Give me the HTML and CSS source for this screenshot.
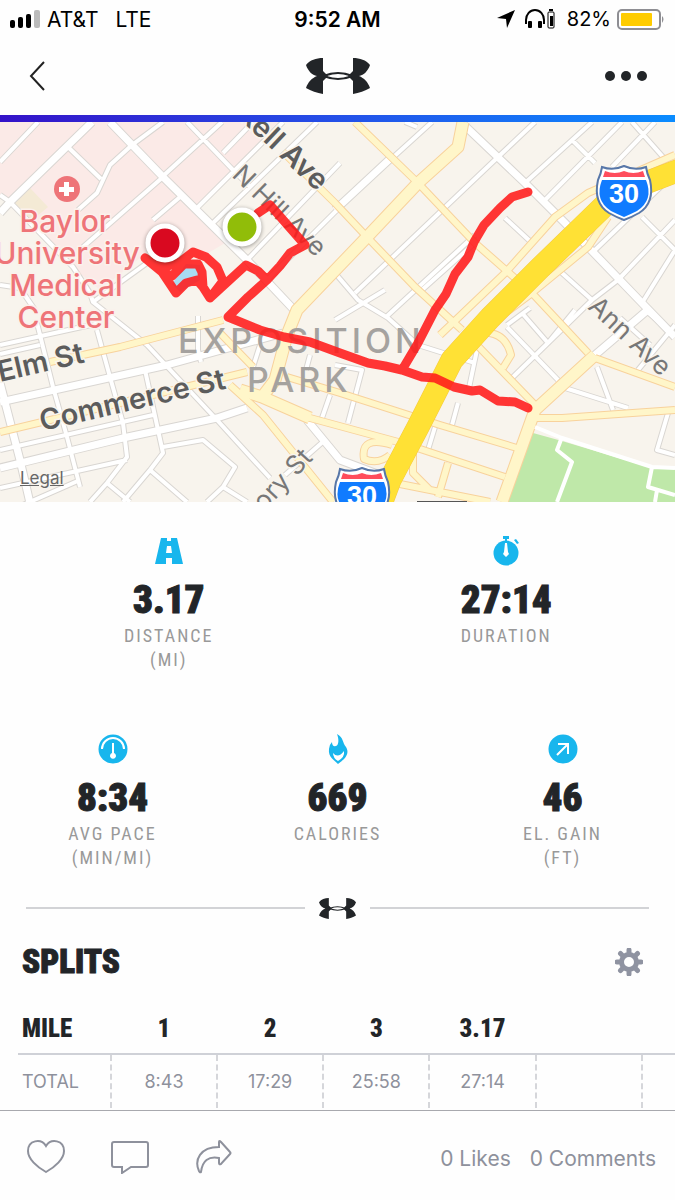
FILE: index.html
```
<!DOCTYPE html>
<html lang="en">
<head>
  <meta charset="UTF-8">
  <meta name="viewport" content="width=device-width, initial-scale=1">
  <title>Workout</title>
  <link rel="stylesheet" href="styles.css">
</head>
<body>
<svg class="defs" width="0" height="0" aria-hidden="true">
  <symbol id="ua" viewBox="0 0 64 36">
    <path id="wing" d="M17 0C10 0 4 2 0 7C2 13 6 17 11 18C6 20 2 24 0 30C5 33 11 35 17 36L17 23L22 18L17 13Z"/>
    <use href="#wing" transform="translate(64 0) scale(-1 1)"/>
    <path d="M17 17Q32 11 47 17V19Q32 25 17 19ZM21 18Q32 22 43 18Q32 14 21 18Z" fill-rule="evenodd"/>
  </symbol>
</svg>

<div class="status">
  <div class="status-left">
    <svg width="30" height="18" viewBox="0 0 30 18"><rect y="10" width="5" height="8" rx="2"/><rect x="8" y="7" width="5" height="11" rx="2"/><rect x="16" y="4" width="5" height="14" rx="2"/><rect x="24" width="6" height="18" rx="2" fill="#bbb"/></svg>
    <span class="carrier">AT&amp;T</span>
    <span>LTE</span>
  </div>
  <div class="time">9:52 AM</div>
  <div class="status-right">
    <svg width="18" height="18" viewBox="0 0 18 18"><path d="M18 0L10 18L9 9L0 8Z"/></svg>
    <svg class="phones" width="30" height="20" viewBox="0 0 30 20"><path d="M1 15V11A9 10 0 0 1 19 11V15" fill="none" stroke="#000" stroke-width="2"/><rect x="3" y="12" width="4" height="7" rx="1"/><rect x="13" y="12" width="4" height="7" rx="1"/><rect x="23" y="3" width="6" height="16" rx="1" fill="none" stroke="#000"/><rect x="24" y="0" width="4" height="2"/><rect x="25" y="7" width="3" height="10"/></svg>
    <span>82%</span>
    <svg width="48" height="21" viewBox="0 0 48 21"><rect x="1" y="1" width="42" height="19" rx="4" fill="#fff" stroke="#8e8e93" stroke-width="2"/><rect x="4" y="4" width="31" height="13" rx="1" fill="#fc0"/><path d="M45 7Q48 10 45 14Z" fill="#8e8e93"/></svg>
  </div>
</div>

<header class="bar">
  <button type="button" aria-label="Back"><svg width="18" height="32" viewBox="0 0 18 32"><path d="M16 2L3 16L16 30" fill="none" stroke="#222" stroke-width="2"/></svg></button>
  <svg class="logo" width="64" height="36" aria-label="Under Armour"><use href="#ua"/></svg>
  <button type="button" aria-label="More"><svg width="42" height="10" viewBox="0 0 42 10"><circle cx="5" cy="5" r="5"/><circle cx="21" cy="5" r="5"/><circle cx="37" cy="5" r="5"/></svg></button>
</header>

<div class="map">
  <svg viewBox="0 122 675 380" aria-label="Route map">
    <defs>
      <path id="small" d="M38 122L0 162M68 147L101 179M163 122L132 145L110 165L97 193L78 210M162 177L222 122M187 122L233 170L250 187M163 177L83 247M180 197L153 220M197 208L283 122M213 223L317 122M247 260L340 163M267 280L340 207M223 153L253 122M0 195L10 202L73 267L90 293L93 302L147 345L217 420L270 478M147 263L93 302M0 285L20 288L35 310M37 323L53 387L67 437L80 487M0 345L100 323M0 354L40 345M97 330L110 377L123 423L127 457L107 483L90 502M145 370L163 453L150 470L123 502M150 470L187 502M163 447L203 440L235 467L223 487L207 502M223 487L247 502M107 483L130 502M0 450L153 415M0 488L127 460M0 515L80 480M198 316L198 350L201 362M260 345L253 367M285 475L325 440M330 395L322 418M310 355L306 370
        M335 210L432 122M355 293L498 157L535 122M422 290L478 240M385 318L475 235M335 320L385 290M335 273L358 300L388 318L418 345L475 363M525 183L592 122M545 200L622 122M572 140L595 163M632 122L663 157M612 167L655 122M405 122L417 127M505 218L532 243M595 250L675 173M618 280L675 220M642 303L675 250M642 217L675 250M562 273L592 300L618 280M507 327L558 380M507 325L530 308M512 378L592 300M522 313L548 343L575 310M478 345L469 388M452 425L458 403M435 427L428 450M335 365L362 370L348 423M565 388L628 408M597 367L613 410M668 413L657 450L675 455M638 370L675 325M620 318L650 345M645 310L675 335"/>
      <path id="main" d="M92 122L10 202L0 213M110 122L163 177L247 260L297 313M0 402L167 365L283 333M0 468L123 438L217 418L247 408M0 383L20 460L30 503M307 420L340 460L380 475M463 124L525 183L565 223L642 303L675 337M335 210L392 157M595 355L650 308"/>
      <path id="yellow" d="M50 362L120 347L223 320M0 432L67 416L247 372M220 333L253 367M230 385L263 415L333 502M287 377L340 393L415 417L440 425L517 448M263 397L310 418L402 443L505 477M355 122L418 183L475 243L532 293L588 353M283 152L335 203L367 237L415 287L462 330M675 155L588 193L555 217L505 273L440 335M608 217L588 247L532 293L475 336M475 343L537 407M595 358L675 387M535 418L562 418L675 410M480 333Q505 330 511 355L503 368M392 445Q360 435 364 459Q378 465 390 455M448 463L438 497M395 483L490 502M413 450L413 473L430 490"/>
      <path id="wide" d="M463 122L458 147L418 183L367 237L297 310L287 335L275 380L262 397L240 390M262 397L310 418M502 502L535 410L595 355"/>
      <path id="shield" d="M-22 -24Q-11 -20 0 -25Q11 -20 22 -24Q23 -17 26 -11Q31 12 15 22Q8 26 0 29Q-8 26 -15 22Q-31 12 -26 -11Q-23 -17 -22 -24Z"/>
    </defs>
    <rect y="122" width="675" height="380" fill="#f8f4ed"/>
    <path d="M0 122H283L197 210L230 240L200 258L150 250L100 290L70 265L0 195Z" fill="#fbeae7"/>
    <path d="M12 202L30 188L48 207L30 222Z" fill="#f4ead5"/>
    <path d="M533 433L562 441L652 468L675 468V502H507Z" fill="#bfe8a9"/>
    <path d="M172 284L186 264L200 265L200 280L180 292Z" fill="#a8dcf2"/>

    <use href="#small" class="road case-small"/>
    <use href="#main" class="road case-main"/>
    <use href="#small" class="road fill-small"/>
    <use href="#main" class="road fill-main"/>
    <use href="#yellow" class="road case-yellow"/>
    <use href="#wide" class="road case-wide"/>
    <use href="#yellow" class="road fill-yellow"/>
    <use href="#wide" class="road fill-wide"/>
    <path class="road highway-case" d="M690 166L635 187L605 205L540 268L490 318L452 360L418 427L390 480L378 512"/>
    <path class="road highway" d="M690 166L635 187L605 205L540 268L490 318L452 360L418 427L390 480L378 512"/>
    <path class="road park-path" d="M535 427L562 438L652 467L675 468M562 437L557 450L572 462L557 502M652 467L648 487L675 495M657 490L655 502"/>

    <g class="street">
      <text transform="translate(238 118) rotate(43)" class="bold">kell Ave</text>
      <text transform="translate(231 176) rotate(44)">N Hill Ave</text>
      <text transform="translate(0 382) rotate(-13)" class="bold">Elm St</text>
      <text transform="translate(42 431) rotate(-13)" class="bold">Commerce St</text>
      <text transform="translate(587 308) rotate(43)">Ann Ave</text>
      <text transform="translate(264 512) rotate(-47)">ory St</text>
    </g>
    <g class="area">
      <text x="178" y="353">EXPOSITION</text>
      <text x="247" y="392">PARK</text>
    </g>
    <g class="hospital">
      <circle cx="67" cy="189" r="13"/>
      <path d="M64 182H69V187H74V192H69V196H64V192H59V187H64Z" fill="#fff"/>
      <text x="65" y="232">Baylor</text>
      <text x="67" y="264">University</text>
      <text x="66" y="296">Medical</text>
      <text x="66" y="328">Center</text>
    </g>

    <path class="route" d="M258 213L270 205L284 221L305 245L290 253L280 266L267 280L248 297L228 317L260 330L284 337L310 342L340 353L368 363L385 366L402 370L422 377L435 378L454 387L472 391L480 390L498 401L515 402L528 408M402 370L418 343L435 310L446 294L455 274L468 257L474 242L484 225L500 208L512 197L528 192M267 280L258 271L246 265L210 298L203 287L197 280L186 283L176 293L162 272L145 258L155 265L168 266L180 262L193 252L206 257L217 267L223 281L210 298M162 272L172 276L184 264L198 264L202 272L203 287"/>
    <g class="pins">
      <circle cx="165" cy="243" r="17" fill="#d90920"/>
      <circle cx="242" cy="227" r="17" fill="#91bd09"/>
    </g>

    <g class="interstate" transform="translate(624 191)">
      <use href="#shield" class="edge"/>
      <path d="M-21 -14Q-20 -17 -19 -20Q-9 -16 0 -20Q9 -16 19 -20L21 -14Z" fill="#ff4d5c"/>
      <path d="M-22 -11H22Q30 9 13 20Q7 23 0 26Q-7 23 -13 20Q-30 9 -22 -11Z" fill="#107bff"/>
      <text y="12">30</text>
    </g>
    <g class="interstate" transform="translate(362 493)">
      <use href="#shield" class="edge"/>
      <path d="M-21 -14Q-20 -17 -19 -20Q-9 -16 0 -20Q9 -16 19 -20L21 -14Z" fill="#ff4d5c"/>
      <path d="M-22 -11H22Q30 9 13 20Q7 23 0 26Q-7 23 -13 20Q-30 9 -22 -11Z" fill="#107bff"/>
      <text y="12">30</text>
    </g>
    <rect x="417" y="501" width="50" height="2" fill="#555"/>
  </svg>
  <a class="legal" href="#">Legal</a>
</div>

<main>
  <section class="stats">
    <div class="stat">
      <svg width="30" height="30" viewBox="0 0 30 30"><path d="M7 2H13V5H17V2H23L29 28H18V22H12V28H1ZM13 10L12 17H18L17 10Z" fill-rule="evenodd"/></svg>
      <strong>3.17</strong>
      <span>Distance<br>(mi)</span>
    </div>
    <div class="stat">
      <svg width="30" height="30" viewBox="0 0 30 30"><circle cx="15" cy="17" r="12.500"/><path d="M12 0H18V3H16V6H14V3H12ZM23 4L25 3L28 7L26 8Z"/><path d="M14 7H16L17 16L18 18L15 21L12 18L13 16Z" fill="#fff"/></svg>
      <strong>27:14</strong>
      <span>Duration</span>
    </div>
  </section>
  <section class="stats">
    <div class="stat">
      <svg width="30" height="30" viewBox="0 0 30 30"><circle cx="15" cy="15" r="14.500"/><path d="M4 15A11 11 0 0 1 26 15" fill="none" stroke="#fff" stroke-width="2"/><path d="M14 9H16V19A3 3 0 1 1 14 19Z" fill="#fff"/></svg>
      <strong>8:34</strong>
      <span>Avg Pace<br>(min/mi)</span>
    </div>
    <div class="stat">
      <svg width="30" height="30" viewBox="0 0 30 30"><path d="M14 0C21 4 19 8 23 13C28 21 19 27 15 30C11 26 5 23 6 15Q6 11 9 8Q9 13 13 12C16 11 16 5 14 0Z"/><path d="M10 19Q15 25 21 17Q22 23 15 27Q10 24 10 19Z" fill="#fff"/></svg>
      <strong>669</strong>
      <span>Calories</span>
    </div>
    <div class="stat">
      <svg width="30" height="30" viewBox="0 0 30 30"><circle cx="15" cy="15" r="14.500"/><path d="M9 21L20 10M10 10H20V20" fill="none" stroke="#fff" stroke-width="2"/></svg>
      <strong>46</strong>
      <span>El. Gain<br>(ft)</span>
    </div>
  </section>

  <div class="divider"><svg width="37" height="21"><use href="#ua"/></svg></div>

  <section class="splits">
    <div class="splits-head">
      <h2>SPLITS</h2>
      <button type="button" aria-label="Split settings"><svg width="28" height="28" viewBox="-14 -14 28 28"><g fill="none" stroke="#8f93a1"><circle r="7.500" stroke-width="5"/><path d="M0 -9V-12M0 9V12M-9 0H-12M9 0H12M-7 -7L-8.500 -8.500M7 7L8.500 8.500M-7 7L-8.500 8.500M7 -7L8.500 -8.500" stroke-width="5" stroke-linecap="round"/></g></svg></button>
    </div>
    <table>
      <thead>
        <tr><th scope="col">MILE</th><th scope="col">1</th><th scope="col">2</th><th scope="col">3</th><th scope="col">3.17</th><td></td><td></td></tr>
      </thead>
      <tbody>
        <tr><th scope="row">TOTAL</th><td>8:43</td><td>17:29</td><td>25:58</td><td>27:14</td><td></td><td></td></tr>
      </tbody>
    </table>
  </section>
</main>

<footer>
  <button type="button" aria-label="Like"><svg width="38" height="34" viewBox="0 0 38 34"><path d="M19 32C10 27 1 19 1 11C1 0 14 -2 19 6C24 -2 37 0 37 11C37 19 28 27 19 32Z"/></svg></button>
  <button type="button" aria-label="Comment"><svg width="38" height="34" viewBox="0 0 38 34"><path d="M3 2H35Q37 2 37 4V25Q37 27 35 27H20L11 33V27H3Q1 27 1 25V4Q1 2 3 2Z"/></svg></button>
  <button type="button" aria-label="Share"><svg width="38" height="34" viewBox="0 0 38 34"><path d="M24 2Q24 0 26 2L35 12Q36 13 35 14L26 24Q24 25 24 23V18Q8 15 6 32Q5 33 4 31C-1 20 5 7 24 7Z"/></svg></button>
  <a class="likes" href="#">0 Likes</a>
  <a href="#">0 Comments</a>
</footer>
</body>
</html>
```
FILE: styles.css
```
*{box-sizing:border-box;}
body{margin:0;background:#fefefe;color:#222528;font-family:Inter,Roboto,sans-serif;}
button{padding:0;border:0;background:none;}
svg{display:block;}
.defs{position:absolute;}

.status{display:grid;grid-template-columns:1fr auto 1fr;align-items:center;height:38px;padding:0 10px;font-size:21px;color:#000;}
.status-left,.status-right{display:flex;align-items:center;}
.status-left{gap:7px;}
.carrier{margin-right:10px;}
.status-right{justify-content:flex-end;gap:6px;}
.status-right{font-size:20px;}
.phones{margin:0 6px 0 4px;}
.time{font-weight:600;}

.bar{display:grid;grid-template-columns:1fr auto 1fr;align-items:center;height:77px;padding:0 28px 2px;}
.bar button:last-child{justify-self:end;}
.bar button{fill:#222528;}
.logo,.divider svg{fill:#222528;}

.map{position:relative;border-top:7px solid #2450e8;border-image:linear-gradient(90deg,#3412c8,#2450e8 50%,#0a8cff) 1;border-width:7px 0 0;}
.map svg{width:100%;height:auto;}
.legal{position:absolute;left:20px;bottom:14px;font-size:17px;line-height:20px;color:#666;}
.road{fill:none;stroke-linejoin:round;}
.case-small{stroke:#d9d6d2;stroke-width:6;}
.fill-small{stroke:#fff;stroke-width:4;}
.case-main{stroke:#d9d6d2;stroke-width:9;}
.fill-main{stroke:#fff;stroke-width:7;}
.case-yellow{stroke:#f8d29c;stroke-width:8;}
.fill-yellow{stroke:#fff6c9;stroke-width:6;}
.case-wide{stroke:#f8d29c;stroke-width:13;}
.fill-wide{stroke:#fff6c9;stroke-width:11;}
.highway-case{stroke:#f5c842;stroke-width:23;}
.highway{stroke:#ffe135;stroke-width:22;}
.park-path{stroke:#fff;stroke-width:4;}
.street text{font-size:26px;fill:#777;stroke:#f8f4ed;stroke-width:3px;paint-order:stroke;}
.street .bold{font-size:29px;font-weight:600;fill:#5c5c5c;}
.area{font-size:34px;font-weight:500;letter-spacing:4px;fill:#a5a29f;}
.hospital{font-size:30px;font-weight:500;text-anchor:middle;fill:#ee7478;}
.hospital text{stroke:#fbf1ec;stroke-width:3px;paint-order:stroke;}
.route{fill:none;stroke:#ff1a1a;stroke-opacity:.88;stroke-width:9;stroke-linecap:round;stroke-linejoin:round;}
.pins{stroke:#fff;stroke-width:5;filter:drop-shadow(0 1px 2px rgba(0,0,0,.4));}
.edge{fill:#fff;stroke:#5877a8;stroke-width:2;}
.interstate text{font-family:"Liberation Sans",sans-serif;font-size:27px;font-weight:700;text-anchor:middle;fill:#fff;}

.stats{display:flex;height:198px;padding-top:34px;}
.stat{display:flex;flex:1;flex-direction:column;align-items:center;text-align:center;}
.stat svg{fill:#18b6ed;}
.stat strong{margin:12px 0 2px;font-family:"Roboto Condensed",Roboto,sans-serif;font-size:39px;font-weight:900;line-height:44px;-webkit-text-stroke:1px #222528;}
.stat span{font-family:"Roboto Condensed",Roboto,sans-serif;font-size:18px;line-height:24px;letter-spacing:2px;text-transform:uppercase;color:#999;}

.divider{display:flex;align-items:center;gap:14px;height:20px;padding:0 26px;}
.divider::before,.divider::after{content:"";flex:1;height:2px;background:#d2d3d6;}

.splits-head{display:flex;align-items:center;justify-content:space-between;height:80px;margin-left:-18px;padding:8px 32px 0 22px;}
h2{margin:0;font-family:"Roboto Condensed",Roboto,sans-serif;font-size:33px;font-weight:900;line-height:40px;-webkit-text-stroke:1px #222528;}
.splits{overflow:hidden;padding-left:18px;}
table{width:100%;border-collapse:collapse;table-layout:fixed;font-size:18px;color:#8e919c;}
th,td{width:16%;padding:0;font-weight:400;text-align:center;}
th:first-child{width:14%;padding-left:4px;text-align:left;}
td:last-child{width:5%;}
thead tr{height:56px;border-bottom:2px solid #cfd1d7;}
thead th{padding-top:6px;font-family:"Roboto Condensed",Roboto,sans-serif;font-size:25px;font-weight:900;color:#222528;}
tbody tr{height:54px;}
tbody td{border-left:2px dashed #d5d6da;}

footer{display:flex;align-items:center;gap:46px;height:90px;margin-top:2px;padding:2px 19px 0 27px;border-top:1px solid #a8a9ae;}
footer svg{fill:none;stroke:#8e919c;stroke-width:2;}
footer a{padding-top:4px;font-size:21px;color:#8e919c;text-decoration:none;white-space:nowrap;}
footer a+a{margin-left:-27px;}
.likes{margin-left:auto;}
```
